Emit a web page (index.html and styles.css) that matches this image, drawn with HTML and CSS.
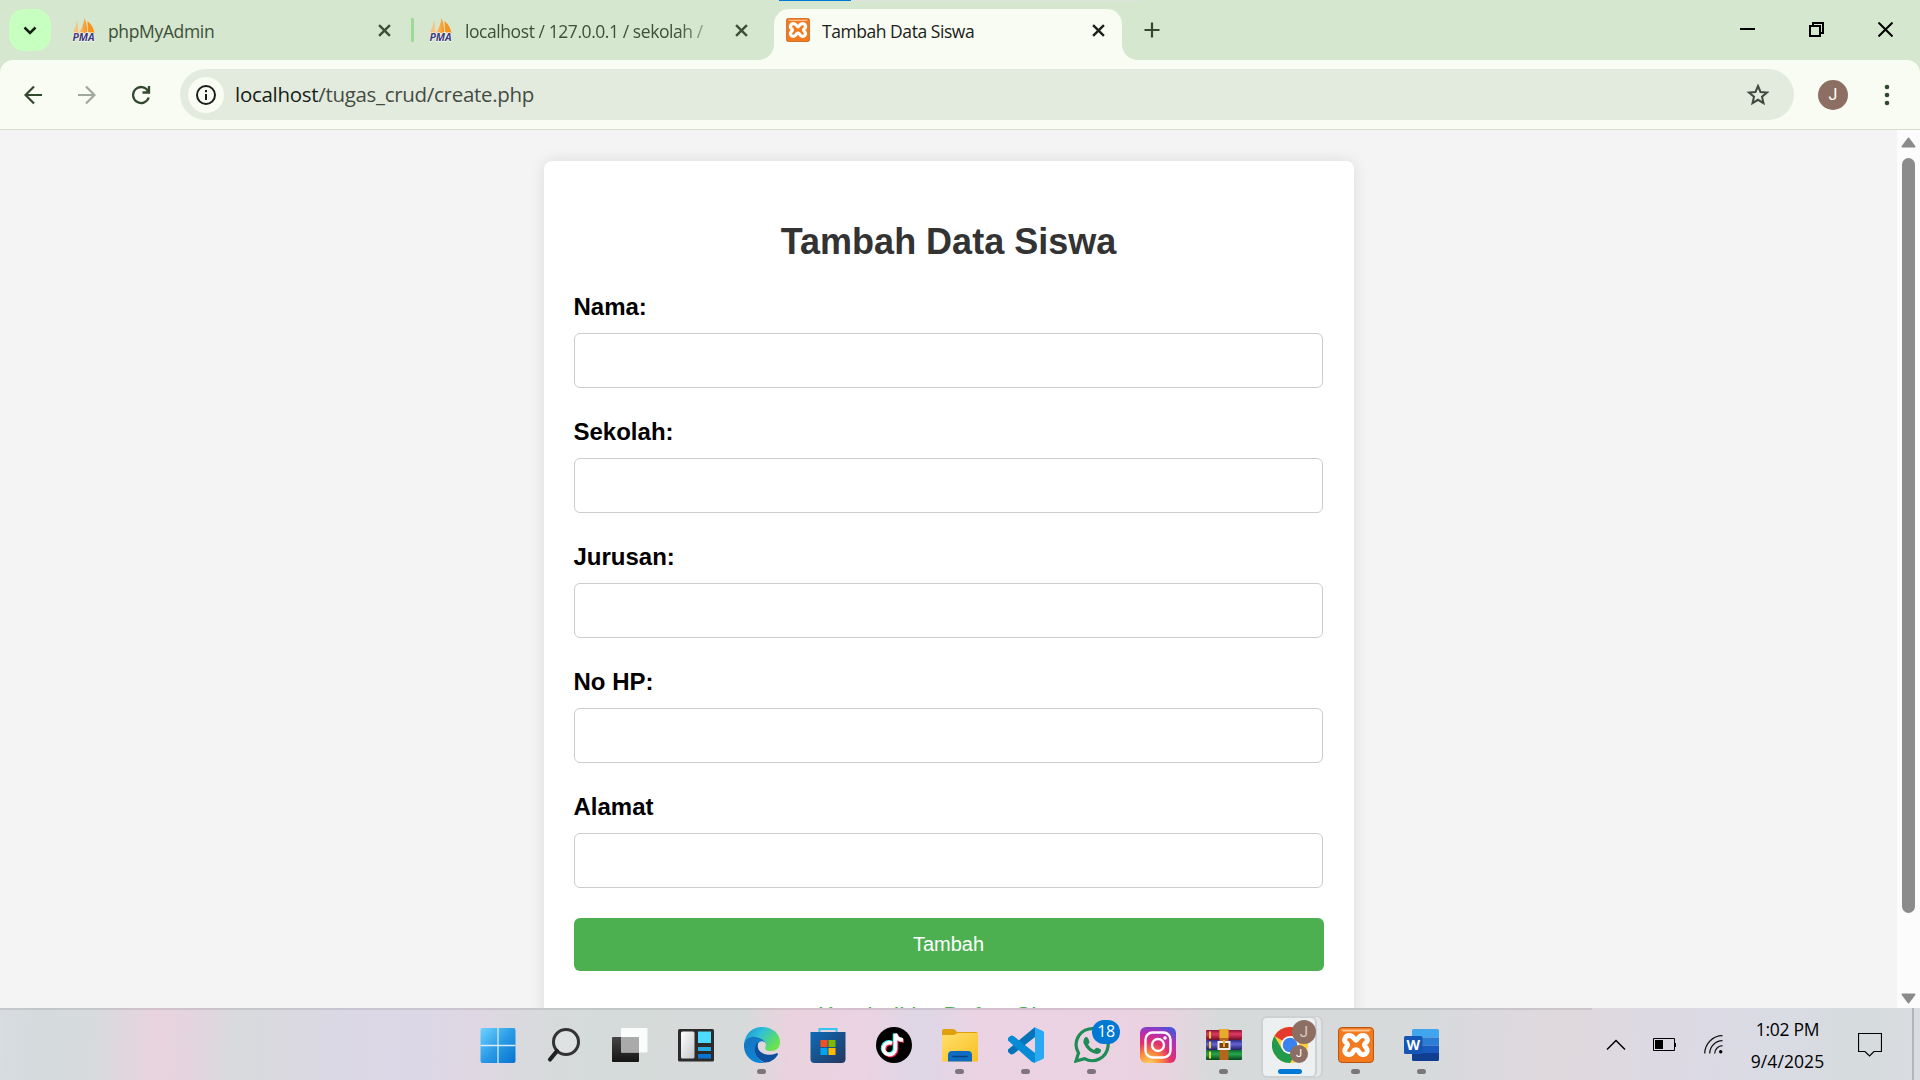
FILE: index.html
```html
<!DOCTYPE html>
<html lang="id">
<head>
<meta charset="utf-8">
<title>Tambah Data Siswa</title>
<link rel="stylesheet" href="styles.css">
</head>
<body>
<svg width="0" height="0" class="defs">
  <defs>
    <linearGradient id="sail" x1="0" x2="1"><stop offset="0" stop-color="#fbc27c"/><stop offset="1" stop-color="#f7941d"/></linearGradient>
    <linearGradient id="win" x1="0" y1="0" x2="1" y2="1"><stop offset="0" stop-color="#6fd3ff"/><stop offset=".5" stop-color="#2a9be6"/><stop offset="1" stop-color="#0673d0"/></linearGradient>
    <linearGradient id="dark" x1="0" y1="0" x2="0" y2="1"><stop offset="0" stop-color="#454545"/><stop offset="1" stop-color="#151515"/></linearGradient>
    <linearGradient id="pane" x1="0" y1="0" x2="1" y2="1"><stop offset="0" stop-color="#fff"/><stop offset="1" stop-color="#c3c6ca"/></linearGradient>
    <linearGradient id="edgeTop" x1="0" y1="0" x2="1" y2=".6"><stop offset="0" stop-color="#1688d0"/><stop offset=".45" stop-color="#2fc0d8"/><stop offset="1" stop-color="#6be34b"/></linearGradient>
    <linearGradient id="edgeLow" x1="0" y1="0" x2=".6" y2="1"><stop offset="0" stop-color="#1673b9"/><stop offset="1" stop-color="#0b86dc"/></linearGradient>
    <linearGradient id="store" x1="0" y1="0" x2="1" y2="1"><stop offset="0" stop-color="#0d6cb8"/><stop offset="1" stop-color="#25365f"/></linearGradient>
    <linearGradient id="folder" x1="0" y1="0" x2="1" y2="1"><stop offset="0" stop-color="#ffdf6e"/><stop offset="1" stop-color="#f9bf20"/></linearGradient>
    <radialGradient id="insta" cx=".25" cy="1.05" r="1.15"><stop offset="0" stop-color="#ffd766"/><stop offset=".3" stop-color="#fb8a3a"/><stop offset=".55" stop-color="#e2306c"/><stop offset=".8" stop-color="#b52fb5"/><stop offset="1" stop-color="#4d52d8"/></radialGradient>
    <linearGradient id="red" x1="0" y1="0" x2="0" y2="1"><stop offset="0" stop-color="#8c1238"/><stop offset=".4" stop-color="#e03a63"/><stop offset="1" stop-color="#6d0d2a"/></linearGradient>
    <linearGradient id="violet" x1="0" y1="0" x2="0" y2="1"><stop offset="0" stop-color="#2d2b80"/><stop offset=".4" stop-color="#6664d4"/><stop offset="1" stop-color="#232063"/></linearGradient>
    <linearGradient id="green" x1="0" y1="0" x2="0" y2="1"><stop offset="0" stop-color="#0b6b2b"/><stop offset=".4" stop-color="#27a84f"/><stop offset="1" stop-color="#07451b"/></linearGradient>
    <symbol id="pma" viewBox="0 0 24 24">
      <path d="M5 1.500 6.500 15H1Q4.500 8 5 1.500Z" fill="#fbc27c"/>
      <path d="M12.500 0Q15.500 7 15 15H7Q11.500 8 12.500 0Z" fill="url(#sail)"/>
      <path d="M15.500 3Q21.500 8 22.500 15.500L16 14Z" fill="#f7941d"/>
      <text x="11.500" y="23.300" text-anchor="middle" class="pma-word">PMA</text>
    </symbol>
    <symbol id="xampp" viewBox="0 0 36 36">
      <rect x=".5" y=".5" width="35" height="35" rx="3.500" fill="#f47a20" stroke="#b9560f"/>
      <path d="M3 2.500H33L31 4.500H5Z" fill="#ffc48d"/>
      <path d="M18 13.300C16 13 15.500 8.500 11.500 8.500C7 8.500 5 13.500 8.500 16Q10.500 18 8.500 20C5 23.500 7.500 28 11.500 27.500C16 27 14.500 22.700 18 22.700S20 27 24.500 27.500C28.500 28 31 23.500 27.500 20Q25.500 18 27.500 16C31 13.500 29 8.500 24.500 8.500C20.500 8.500 20 13 18 13.300Z" fill="none" stroke="#fff" stroke-width="4.800" stroke-linejoin="round"/>
    </symbol>
    <symbol id="cross" viewBox="0 0 12 12"><path d="M1 1 11 11M11 1 1 11" fill="none" stroke="currentColor" stroke-width="2.200"/></symbol>
  </defs>
</svg>

<header class="tabstrip">
  <div class="progress"><i></i></div>
  <button class="tab-search"><svg width="14" height="9" viewBox="0 0 14 9"><path d="M1.500 1.500 7 7 12.500 1.500" fill="none" stroke="#142112" stroke-width="2.500"/></svg></button>
  <div class="tab tab-first"><svg class="fav"><use href="#pma"/></svg><span class="tab-title">phpMyAdmin</span><svg class="close"><use href="#cross"/></svg></div>
  <i class="divider"></i>
  <div class="tab tab-second"><svg class="fav"><use href="#pma"/></svg><span class="tab-title faded">localhost / 127.0.0.1 / sekolah /</span><svg class="close"><use href="#cross"/></svg></div>
  <div class="tab tab-active"><svg class="fav"><use href="#xampp"/></svg><span class="tab-title">Tambah Data Siswa</span><svg class="close"><use href="#cross"/></svg></div>
  <svg class="plus" width="16" height="16"><path d="M8 .5V15.500M.5 8H15.500" stroke="#33492f" stroke-width="2.200"/></svg>
  <div class="window-buttons">
    <svg width="15" height="15"><path d="M0 7H15" stroke="#000" stroke-width="2"/></svg>
    <svg width="15" height="15"><path d="M1 4H11V14H1ZM4 4V1H14V11H11" fill="none" stroke="#000" stroke-width="2"/></svg>
    <svg width="15" height="15"><path d="M.5 .5 14.500 14.500M14.500 .5 .5 14.500" stroke="#000" stroke-width="2"/></svg>
  </div>
</header>

<nav class="toolbar">
  <svg class="nav-icon" width="18" height="20" viewBox="0 0 18 20"><path d="M18 10H2M10 1.500 1.500 10 10 18.500" fill="none" stroke="#33492f" stroke-width="2.200"/></svg>
  <svg class="nav-icon" width="18" height="20" viewBox="0 0 18 20"><path d="M0 10H16M8 1.500 16.500 10 8 18.500" fill="none" stroke="#a0a89d" stroke-width="2.200"/></svg>
  <svg class="nav-icon" width="20" height="20" viewBox="0 0 20 20"><path d="M16 6A8 8 0 1 0 16.700 12.500M17 1V7.500H10.500" fill="none" stroke="#33492f" stroke-width="2.300"/></svg>
  <div class="omnibox">
    <span class="site-info"><svg width="22" height="22" viewBox="0 0 22 22"><circle cx="11" cy="11" r="9" fill="none" stroke="#1b1d1b" stroke-width="2"/><path d="M11 10V16M11 6V8.200" stroke="#1b1d1b" stroke-width="2"/></svg></span>
    <span class="url"><b>localhost</b>/tugas_crud/create.php</span>
    <svg class="star" width="24" height="24" viewBox="0 0 24 24"><path d="M12 3 14.500 9 21 9.500 16 13.700 17.500 20.200 12 16.800 6.500 20.200 8 13.700 3 9.500 9.500 9Z" fill="none" stroke="#3f4a3e" stroke-width="2"/></svg>
  </div>
  <span class="avatar">J</span>
  <svg class="menu" width="6" height="22"><circle cx="3" cy="3" r="2.300"/><circle cx="3" cy="11" r="2.300"/><circle cx="3" cy="19" r="2.300"/></svg>
</nav>

<div class="viewport">
  <main class="page">
    <form class="card">
      <h2>Tambah Data Siswa</h2>
      <label for="nama">Nama:</label><input id="nama" type="text">
      <label for="sekolah">Sekolah:</label><input id="sekolah" type="text">
      <label for="jurusan">Jurusan:</label><input id="jurusan" type="text">
      <label for="hp">No HP:</label><input id="hp" type="text">
      <label for="alamat">Alamat</label><input id="alamat" type="text">
      <button class="submit" type="button">Tambah</button>
      <a class="back" href="#">Kembali ke Daftar Siswa</a>
    </form>
  </main>
  <div class="scrollbar">
    <svg width="15" height="11"><path d="M7.500 1.500 13.500 9.500H1.500Z" fill="#8b8b8b" stroke="#8b8b8b" stroke-width="2" stroke-linejoin="round"/></svg>
    <i class="thumb"></i>
    <svg width="15" height="11"><path d="M7.500 9.500 13.500 1.500H1.500Z" fill="#8b8b8b" stroke="#8b8b8b" stroke-width="2" stroke-linejoin="round"/></svg>
  </div>
</div>

<footer class="taskbar">
  <div class="apps">
    <span class="app"><svg viewBox="0 0 36 36"><rect x=".5" y="1" width="35" height="35" rx="2" fill="url(#win)"/><path d="M18 1V36M.5 18.500H35.500" stroke="#d6ecf8" stroke-width="1.300"/></svg></span>
    <span class="app"><svg viewBox="0 0 36 36"><circle cx="20" cy="15" r="12.500" fill="#dfe2e3" stroke="#333" stroke-width="3"/><path d="M11 24 4 32.500" stroke="#222" stroke-width="4.200" stroke-linecap="round"/></svg></span>
    <span class="app"><svg viewBox="0 0 36 36"><rect y="10" width="27" height="25" rx="1" fill="url(#dark)"/><rect x="9" y="1" width="26.500" height="24.500" rx="1" fill="#fff" fill-opacity=".9"/><path d="M9 10H27V25.500H9Z" fill="#aaa"/></svg></span>
    <span class="app"><svg viewBox="0 0 36 36"><rect y="2" width="36" height="32.500" rx="1.500" fill="#2b2b2b"/><rect x="3" y="4.500" width="13.500" height="27" rx="1.500" fill="url(#pane)"/><path d="M20 4.500H33V16H20Z" fill="#4cdcff"/><path d="M20 20H33V24H20Z" fill="#27aae6"/><path d="M20 27H33V31.500H20Z" fill="#0a74d2"/></svg></span>
    <span class="app open"><svg viewBox="0 0 36 36"><path d="M0 17C1 7 8 0 18 0C29 0 36 7 36 15C36 21 32 24 27 24C22 24 20.500 22 21.500 20C23 17 21 13.500 16 12C9 10 3 11 0 17Z" fill="url(#edgeTop)"/><path d="M0 17C2 11 8 8.500 14 10.500C19 12 22 15 22 17C21 14.500 18 13.500 15.500 15C7 20 11 33 21 35.700C9 38 -1 29 0 17Z" fill="url(#edgeLow)"/><path d="M15 14.500C8 19 9 31 20.500 35.500C26 36 31.500 32 34 27.500C34 26 33 26 32 26.500C23 30.500 12 25 14 17Q14.200 15.500 15 14.500Z" fill="#0c4f9d"/></svg></span>
    <span class="app"><svg viewBox="0 0 36 36"><path d="M9.500 7V2H26.500V7" fill="none" stroke="#36c5f0" stroke-width="2"/><path d="M.5 5H35.500V32Q35.500 36 31.500 36H4.500Q.5 36 .5 32Z" fill="url(#store)"/><path d="M10.500 13H17.500V20H10.500Z" fill="#f25022"/><path d="M18.500 13H25.500V20H18.500Z" fill="#7fba00"/><path d="M10.500 21H17.500V28H10.500Z" fill="#00a4ef"/><path d="M18.500 21H25.500V28H18.500Z" fill="#ffb900"/></svg></span>
    <span class="app"><svg viewBox="0 0 36 36"><circle cx="18" cy="18" r="18"/><g fill="none" stroke-width="4"><path d="M16 16.200A6 6 0 1 0 19.500 22V7Q21 13 27 13" stroke="#25f4ee" transform="translate(-.8 -.6)"/><path d="M16 16.200A6 6 0 1 0 19.500 22V7Q21 13 27 13" stroke="#fe2c55" transform="translate(.9 .8)"/><path d="M16 16.200A6 6 0 1 0 19.500 22V7Q21 13 27 13" stroke="#fff" stroke-width="3.600"/></g></svg></span>
    <span class="app open"><svg viewBox="0 0 36 36"><path d="M0 4Q0 2 2 2H11Q13 2 15 5H34Q36 5 36 7V12H0Z" fill="#dfa00d"/><path d="M0 8H11Q13 8 15.500 6H36V34.500H0Z" fill="url(#folder)"/><path d="M6 34.500V28Q6 24 10 24H26Q30 24 30 28V34.500Z" fill="#0f6cc0"/><path d="M11 29.500H25" stroke="#09437f" stroke-width="1.600" stroke-linecap="round"/></svg></span>
    <span class="app open"><svg viewBox="0 0 36 36"><path d="M27 0 0 22.500V25L3 27.500 5.500 27 27 10Z" fill="#0673b9"/><path d="M0 11 3 8.500 5.500 9 27 26V36L24 35 0 13.500Z" fill="#078bd4"/><path d="M26 0 35 4Q36 4.500 36 6V30Q36 31.500 35 32L26 36Q27 35 27 33V3Q27 1 26 0Z" fill="#28a9f1"/></svg></span>
    <span class="app open"><svg viewBox="0 0 36 36"><path d="M2 34 4.500 26A16 16 0 1 1 10.500 31.700Z" fill="none" stroke="#1d8c57" stroke-width="3.200"/><path d="M11.500 10Q13.500 9.500 14.500 12L15.500 15Q15 16.500 14 17.500Q16 21 20 23L22 21Q23 20.500 24 21L27 22.500Q27.500 26 23.500 27Q17 27 12 20.500Q7 14 11.500 10Z" fill="#1d8c57"/></svg><em class="badge">18</em></span>
    <span class="app"><svg viewBox="0 0 36 36"><rect width="36" height="36" rx="6" fill="url(#insta)"/><rect x="5.500" y="5.500" width="25" height="25" rx="7" fill="none" stroke="#fff" stroke-width="2.400"/><circle cx="18" cy="18" r="6" fill="none" stroke="#fff" stroke-width="2.400"/><circle cx="25" cy="11" r="1.800" fill="#fff"/></svg></span>
    <span class="app open"><svg viewBox="0 0 36 36"><rect y="3" width="36" height="10" rx="1" fill="url(#red)"/><rect y="13" width="36" height="10" rx="1" fill="url(#violet)"/><rect y="23" width="36" height="10" rx="1" fill="url(#green)"/><path d="M4 4.500V11.500M4 14.500V21.500M4 24.500V31.500" stroke="#f5d330" stroke-width="2"/><path d="M13.500 2H22.500V33H13.500Z" fill="#b5661c"/><path d="M13.500 2H22.500V11H13.500Z" fill="#e8ab29"/><path d="M12.500 15H23.500V22H12.500Z" fill="#7a4313" stroke="#eee" stroke-width="2"/><path d="M18 13V20" stroke="#e8ab29" stroke-width="2"/></svg></span>
    <span class="app active open"><svg viewBox="0 0 36 36"><circle cx="18" cy="18" r="18" fill="#ffcd40"/><path d="M18 18 2.400 9A18 18 0 0 1 33.600 9L18 9Z" fill="#e33b2e"/><path d="M2.400 9A18 18 0 0 0 18 36L26 22.500 18 18 10.200 22.500Z" fill="#229a4b"/><circle cx="18" cy="18" r="9" fill="#fff"/><circle cx="18" cy="18" r="7.300" fill="#3b82f0"/></svg><em class="profile large">J</em><em class="profile small">J</em></span>
    <span class="app open"><svg><use href="#xampp"/></svg></span>
    <span class="app open"><svg viewBox="0 0 36 36"><path d="M8 3.500Q8 2 9.500 2H33.500Q35 2 35 3.500V10.500H8Z" fill="#41a5ee"/><path d="M8 10.500H35V18.500H8Z" fill="#2b7cd3"/><path d="M8 18.500H35V26H8Z" fill="#185abd"/><path d="M8 26H35V32.500Q35 34 33.500 34H9.500Q8 34 8 32.500Z" fill="#103f91"/><rect y="9" width="18.500" height="18" rx="1.500" fill="#1556b5"/><text x="9.200" y="22.500" text-anchor="middle" class="word">W</text></svg></span>
  </div>
  <div class="tray">
    <svg width="20" height="12"><path d="M1 10.500 10 1.500 19 10.500" fill="none" stroke="#000" stroke-width="1.500"/></svg>
    <svg width="24" height="13"><path d="M.5 .5H21.500V12.500H.5Z" fill="none" stroke="#000"/><path d="M2 2H10V11H2ZM22 5H23V9H22Z"/></svg>
    <svg width="19" height="19"><path d="M.7 18.500A18 18 0 0 1 18.500 .7M5.700 18.500A13 13 0 0 1 18.500 5.700M10.700 18.500A8 8 0 0 1 18.500 10.700" fill="none" stroke="#111" stroke-width="1.200"/><circle cx="16.700" cy="16.700" r="1.700"/></svg>
    <div class="clock"><span>1:02 PM</span><span class="date">9/4/2025</span></div>
    <svg width="24" height="24"><path d="M.5 .5H23.500V18.500H16L11.500 23 7 18.500H.5Z" fill="none" stroke="#000" stroke-width="1.200"/></svg>
  </div>
  <i class="show-desktop"></i>
</footer>
</body>
</html>
```
FILE: styles.css
```css
* { box-sizing: border-box; }
body {
  margin: 0;
  width: 1920px;
  height: 1080px;
  overflow: hidden;
  display: flex;
  flex-direction: column;
  font-family: "Open Sans", "Noto Sans", sans-serif;
  background: #d5e7ce;
}
svg { display: block; flex: none; }
.defs { position: absolute; }
button { border: 0; padding: 0; font: inherit; }

/* Tab strip */
.tabstrip { position: relative; height: 60px; flex: none; display: flex; padding-left: 9px; background: #d5e7ce; }
.progress { position: absolute; left: 779px; top: 0; width: 362px; height: 1px; background: #dfe3e0; }
.progress i { display: block; width: 72px; height: 1px; background: #0078d7; }
.tab-search { width: 42px; height: 42px; margin-top: 9px; border-radius: 15px; background: #c7ffc0; display: grid; place-items: center; }
.tab { display: flex; align-items: center; height: 42px; margin-top: 9px; color: #3c4f39; font-size: 17.500px; letter-spacing: -.35px; }
.tab-first { width: 360px; padding: 0 20px 0 21px; }
.tab-second { width: 360px; padding: 0 26px 0 15px; }
.fav { width: 24px; height: 24px; margin-right: 12px; }
.tab-title { flex: 1; white-space: nowrap; overflow: hidden; line-height: 30px; padding-top: 2px; }
.tab-active .tab-title { letter-spacing: -.45px; }
.tab-title.faded { -webkit-mask-image: linear-gradient(90deg, #000 86%, transparent 104%); mask-image: linear-gradient(90deg, #000 86%, transparent 104%); margin-right: 22px; letter-spacing: -.43px; }
.close { width: 13px; height: 13px; }
.divider { width: 3px; height: 24px; margin-top: 18px; background: #9cda96; border-radius: 1px; }
.tab-active { position: relative; width: 348px; height: 51px; padding: 0 17px 9px 12px; border-radius: 15px 15px 0 0; background: #f8fcf2; color: #1b2119; }
.tab-active::before, .tab-active::after { content: ""; position: absolute; bottom: 0; width: 15px; height: 15px; }
.tab-active::before { left: -15px; background: radial-gradient(circle at 0 0, transparent 14.500px, #f8fcf2 15px); }
.tab-active::after { right: -15px; background: radial-gradient(circle at 100% 0, transparent 14.500px, #f8fcf2 15px); }
.plus { margin: 22px 0 0 22px; }
.window-buttons { margin: 22px 27px 0 auto; display: flex; gap: 54px; }
.pma-word { font: italic bold 10.500px "Open Sans", sans-serif; letter-spacing: 0; fill: #3f3a78; stroke: #fff; stroke-width: 1px; paint-order: stroke; }

/* Toolbar */
.toolbar { height: 70px; flex: none; display: flex; align-items: center; padding: 0 30px 0 24px; background: #f8fcf2; border-radius: 13px 13px 0 0; border-bottom: 1px solid #d8ddd1; }
.nav-icon { margin-right: 36px; }
.nav-icon:nth-child(3) { margin-right: 28px; }
.omnibox { width: 1614px; height: 51px; border-radius: 26px; background: #e3ebdf; display: flex; align-items: center; padding: 0 24px 0 8px; }
.site-info { width: 36px; height: 36px; border-radius: 50%; background: #f8fcf2; display: grid; place-items: center; }
.url { flex: 1; margin: -2px 0 0 11px; font-size: 20.500px; letter-spacing: -.3px; color: #434b42; white-space: nowrap; }
.url b { font-weight: 400; color: #171d16; }
.avatar { width: 30px; height: 30px; border-radius: 50%; margin-left: 24px; background: #8d6e63; color: #fff; font: 16px/30px Roboto, sans-serif; text-align: center; }
.menu { margin-left: auto; fill: #33492f; }

/* Page */
.viewport { flex: 1; min-height: 0; overflow: hidden; display: flex; background: #f4f4f4; }
.page { flex: 1; display: flex; justify-content: center; align-items: flex-start; padding-top: 31px; font-family: "Liberation Sans", Arial, sans-serif; }
.card { width: 810px; height: 960px; padding: 30px; background: #fff; border-radius: 8px; box-shadow: 0 0 15px rgba(0, 0, 0, .1); display: flex; flex-direction: column; }
.card h2 { margin: 30px 0 31px; font-size: 36px; line-height: 41px; color: #333; text-align: center; }
.card label { font-size: 24px; font-weight: 700; line-height: 27px; margin: 0 0 13px; height: 27px; }
.card input { width: 749px; height: 55px; margin: 0 0 30px; border: 1px solid #ccc; border-radius: 6px; background: #fff; }
.submit { height: 53px; border-radius: 6px; background: #4caf50; color: #fff; font-size: 20px; flex: none; }
.back { margin-top: 31px; text-align: center; color: #4caf50; font-size: 24px; line-height: 27px; text-decoration: none; }
.scrollbar { width: 23px; background: #fcfcfc; display: flex; flex-direction: column; align-items: center; justify-content: space-between; padding: 7px 0 4px; }
.thumb { width: 13px; height: 755px; margin: 10px 0 auto; border-radius: 7px; background: #8b8b8b; }

/* Taskbar */
.taskbar {
  position: relative; height: 72px; flex: none; display: flex; padding-left: 465px;
  background: linear-gradient(93deg, #d9dce0 0, #d4dbdd 35px, #d8dadd 100px, #e8d3de 155px, #e2d5df 200px, #d8dadd 235px, #d9d9df 290px, #dbd8e6 340px, #dcd7e6 430px, #dfd7e3 475px, #d9dadd 525px, #d5dbda 600px, #d7dada 745px, #ead2de 790px, #ead3e3 870px, #ddd7e6 920px, #ebd3e4 980px, #ead2e1 1140px, #e4d5de 1180px, #d7dada 1215px, #d6dadb 1420px, #dbd9de 1480px, #dfd9dd 1560px, #dcd9e4 1690px, #d9dce4 1780px, #d6dbdd 1860px, #d9dce0 1920px);
}
.taskbar::before { content: ""; position: absolute; left: 0; top: 0; width: 1592px; height: 2px; background: rgba(120, 120, 120, .2); }
.apps { display: flex; }
.app { position: relative; width: 66px; height: 72px; display: grid; place-items: center; padding-top: 2px; }
.app > svg { width: 36px; height: 36px; position: relative; }
.app.open::after { content: ""; position: absolute; left: 28px; bottom: 6px; width: 9px; height: 5px; border-radius: 3px; background: rgba(90, 85, 90, .75); }
.app.active::before { content: ""; position: absolute; left: 4px; top: 8px; width: 52px; height: 58px; border-radius: 6px; background: #edf0f0; border: 2px solid #cdd1d1; box-shadow: 5px 0 0 -1px #e5e8e8, 6px 0 0 #cdd1d1; }
.app.active::after { left: 21px; width: 24px; background: #0078d7; }
.badge, .profile { position: absolute; font-style: normal; text-align: center; color: #fff; }
.badge { left: 33px; top: 12px; width: 28px; height: 24px; border-radius: 12px; background: #0078d4; font-size: 16px; line-height: 23px; letter-spacing: -.5px; }
.profile { border-radius: 50%; background: #8d6e63; font-family: Roboto, sans-serif; }
.profile.large { left: 35px; top: 12px; width: 24px; height: 24px; font-size: 15px; line-height: 24px; color: #d8cac5; }
.profile.small { left: 33px; top: 37px; width: 18px; height: 18px; font-size: 11px; line-height: 18px; }
.word { font: bold 14px "Open Sans", sans-serif; fill: #fff; }
.tray { display: flex; align-items: center; margin-left: auto; padding: 1px 38px 0 0; }
.tray svg:nth-child(1) { margin-right: 27px; }
.tray svg:nth-child(2) { margin-right: 27px; }
.tray svg:nth-child(3) { margin-right: 24px; }
.clock { width: 81px; margin-right: 30px; display: flex; flex-direction: column; text-align: center; font-size: 17.500px; line-height: 32px; white-space: nowrap; letter-spacing: -.3px; }
.date { letter-spacing: .1px; }
.show-desktop { position: absolute; right: 6px; top: 0; width: 2px; height: 72px; background: #b2b6b8; }
```
